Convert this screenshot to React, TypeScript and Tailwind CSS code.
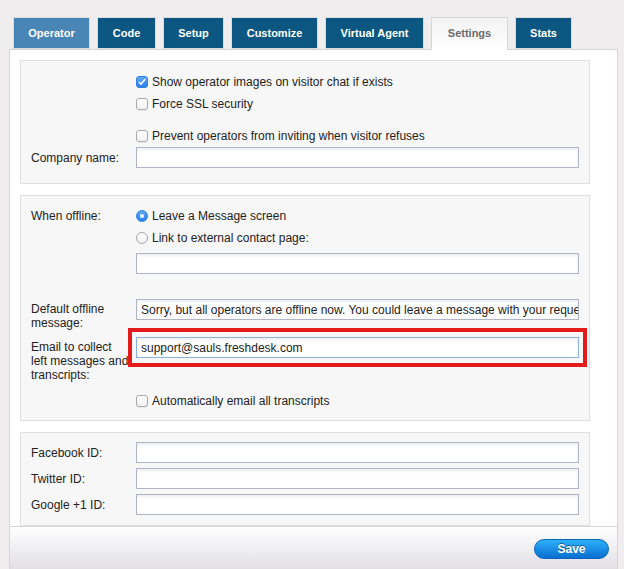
import React from 'react';

const tabs = [
  { name: 'Operator', w: 'w-[77px]', style: 'bg-[#4a86b5] text-white' },
  { name: 'Code', w: 'w-[59px]', style: 'bg-[#0c5781] text-white' },
  { name: 'Setup', w: 'w-[61px]', style: 'bg-[#0c5781] text-white' },
  { name: 'Customize', w: 'w-[87px]', style: 'bg-[#0c5781] text-white' },
  { name: 'Virtual Agent', w: 'w-[99px]', style: 'bg-[#0c5781] text-white' },
  { name: 'Settings', w: 'w-[77px]', style: 'active' },
  { name: 'Stats', w: 'w-[57px]', style: 'bg-[#0c5781] text-white' },
];

function Checkbox({ checked = false }: { checked?: boolean }) {
  if (checked) {
    return (
      <span className="flex h-[12px] w-[12px] shrink-0 items-center justify-center rounded-[3px] border border-[#2f7fe0] bg-gradient-to-b from-[#5aa9f8] to-[#2b80ea]">
        <svg width="8" height="8" viewBox="0 0 8 8" fill="none">
          <path d="M1.3 4.3 L3.1 6.1 L6.8 1.6" stroke="white" strokeWidth="1.5" strokeLinecap="round" strokeLinejoin="round" />
        </svg>
      </span>
    );
  }
  return (
    <span className="h-[12px] w-[12px] shrink-0 rounded-[3px] border border-[#a8a8a8] bg-gradient-to-b from-white to-[#f1f1f1] shadow-[0_1px_0_rgba(0,0,0,0.05)]" />
  );
}

function Radio({ checked = false }: { checked?: boolean }) {
  if (checked) {
    return (
      <span className="flex h-[12px] w-[12px] shrink-0 items-center justify-center rounded-full border border-[#2f7fe0] bg-gradient-to-b from-[#5aa9f8] to-[#2b80ea]">
        <span className="h-[4px] w-[4px] rounded-full bg-white" />
      </span>
    );
  }
  return (
    <span className="h-[12px] w-[12px] shrink-0 rounded-full border border-[#a8a8a8] bg-gradient-to-b from-white to-[#f1f1f1]" />
  );
}

function TextInput({ value = '', focus = false }: { value?: string; focus?: boolean }) {
  return (
    <div
      className={`flex h-[21px] w-[443px] items-center overflow-hidden whitespace-nowrap border bg-white pl-[4px] shadow-[inset_0_2px_3px_rgba(0,0,0,0.07)] ${
        focus ? 'border-[#8ab1df]' : 'border-[#b1b4c7]'
      }`}
    >
      {value}
    </div>
  );
}

function Row({ label, children, className = '' }: { label?: React.ReactNode; children?: React.ReactNode; className?: string }) {
  return (
    <div className={`flex ${className}`}>
      <div className="w-[105px] shrink-0 leading-[14px]">{label}</div>
      <div className="w-[443px]">{children}</div>
    </div>
  );
}

function CheckRow({ children, checked, radio }: { children: React.ReactNode; checked?: boolean; radio?: boolean }) {
  return (
    <Row className="h-[22px] items-center">
      <div className="flex items-center gap-[4px]">
        {radio ? <Radio checked={checked} /> : <Checkbox checked={checked} />}
        <span>{children}</span>
      </div>
    </Row>
  );
}

function Section({ children, className = '' }: { children: React.ReactNode; className?: string }) {
  return <div className={`w-[570px] border border-[#e1e1e1] bg-[#f7f7f7] pl-[10px] ${className}`}>{children}</div>;
}

export default function App() {
  return (
    <div className="h-[569px] w-[624px] overflow-hidden bg-[#efedee] font-['Liberation_Sans',Arial,sans-serif] text-[12px] text-[#222]">
      {/* Tabs */}
      <div className="flex h-[49px] gap-[7px] pl-[13px] pt-[17px]">
        {tabs.map((t) =>
          t.style === 'active' ? (
            <div
              key={t.name}
              className={`relative z-10 flex h-[33px] ${t.w} items-center justify-center border border-b-0 border-[#d6d6d6] bg-gradient-to-b from-[#f3f3f3] to-white pb-[1px] text-[11px] font-bold text-[#6a6a6a]`}
            >
              {t.name}
            </div>
          ) : (
            <div
              key={t.name}
              className={`flex h-[32px] ${t.w} items-center justify-center border border-[#dcdcdc] text-[11px] font-bold ${t.style}`}
            >
              {t.name}
            </div>
          )
        )}
      </div>

      {/* Panel */}
      <div className="ml-[9px] w-[609px] border border-[#d6d6d6] bg-white">
        <div className="h-[476px] overflow-hidden pl-[10px] pt-[10px]">
          <Section className="pb-[15px] pt-[10px]">
            <CheckRow checked>Show operator images on visitor chat if exists</CheckRow>
            <CheckRow>Force SSL security</CheckRow>
            <div className="h-[10px]" />
            <CheckRow>Prevent operators from inviting when visitor refuses</CheckRow>
            <Row label="Company name:" className="items-center">
              <TextInput />
            </Row>
          </Section>

          <Section className="mt-[11px] pb-[8px] pt-[9px]">
            <Row label="When offline:" className="h-[22px] items-center">
              <div className="flex items-center gap-[4px]">
                <Radio checked />
                <span>Leave a Message screen</span>
              </div>
            </Row>
            <CheckRow radio>Link to external contact page:</CheckRow>
            <Row className="mt-[4px]">
              <TextInput />
            </Row>
            <Row
              className="mt-[25px] items-start"
              label={
                <div className="pt-[3px]">
                  Default offline
                  <br />
                  message:
                </div>
              }
            >
              <TextInput value="Sorry, but all operators are offline now. You could leave a message with your request" />
            </Row>
            <Row
              className="mt-[7px] items-start"
              label={
                <div className="whitespace-nowrap pt-[3px]">
                  Email to collect
                  <br />
                  left messages and
                  <br />
                  transcripts:
                </div>
              }
            >
              <div className="relative">
                <TextInput value="support@sauls.freshdesk.com" focus />
                <div className="pointer-events-none absolute -bottom-[9px] -left-[8px] -right-[8px] -top-[9px] border-[4px] border-[#e31b1b]" />
              </div>
            </Row>
            <div className="mt-[8px]">
              <CheckRow>Automatically email all transcripts</CheckRow>
            </div>
          </Section>

          <Section className="mt-[11px] pb-[10px] pt-[9px]">
            <div className="flex flex-col gap-[5px]">
              <Row label="Facebook ID:" className="items-center">
                <TextInput />
              </Row>
              <Row label="Twitter ID:" className="items-center">
                <TextInput />
              </Row>
              <Row label="Google +1 ID:" className="items-center">
                <TextInput />
              </Row>
            </div>
          </Section>
        </div>

        {/* Footer */}
        <div className="flex h-[50px] justify-end border-t border-[#d4d4d6] bg-gradient-to-b from-white to-[#dcdae0] pr-[8px] pt-[12px]">
          <button className="h-[20px] w-[75px] rounded-full border border-[#0b64bd] bg-gradient-to-b from-[#2db0fb] to-[#0a6ed0] text-[12px] font-bold text-white [text-shadow:0_-1px_0_rgba(0,0,0,0.45)]">
            Save
          </button>
        </div>
      </div>
    </div>
  );
}
